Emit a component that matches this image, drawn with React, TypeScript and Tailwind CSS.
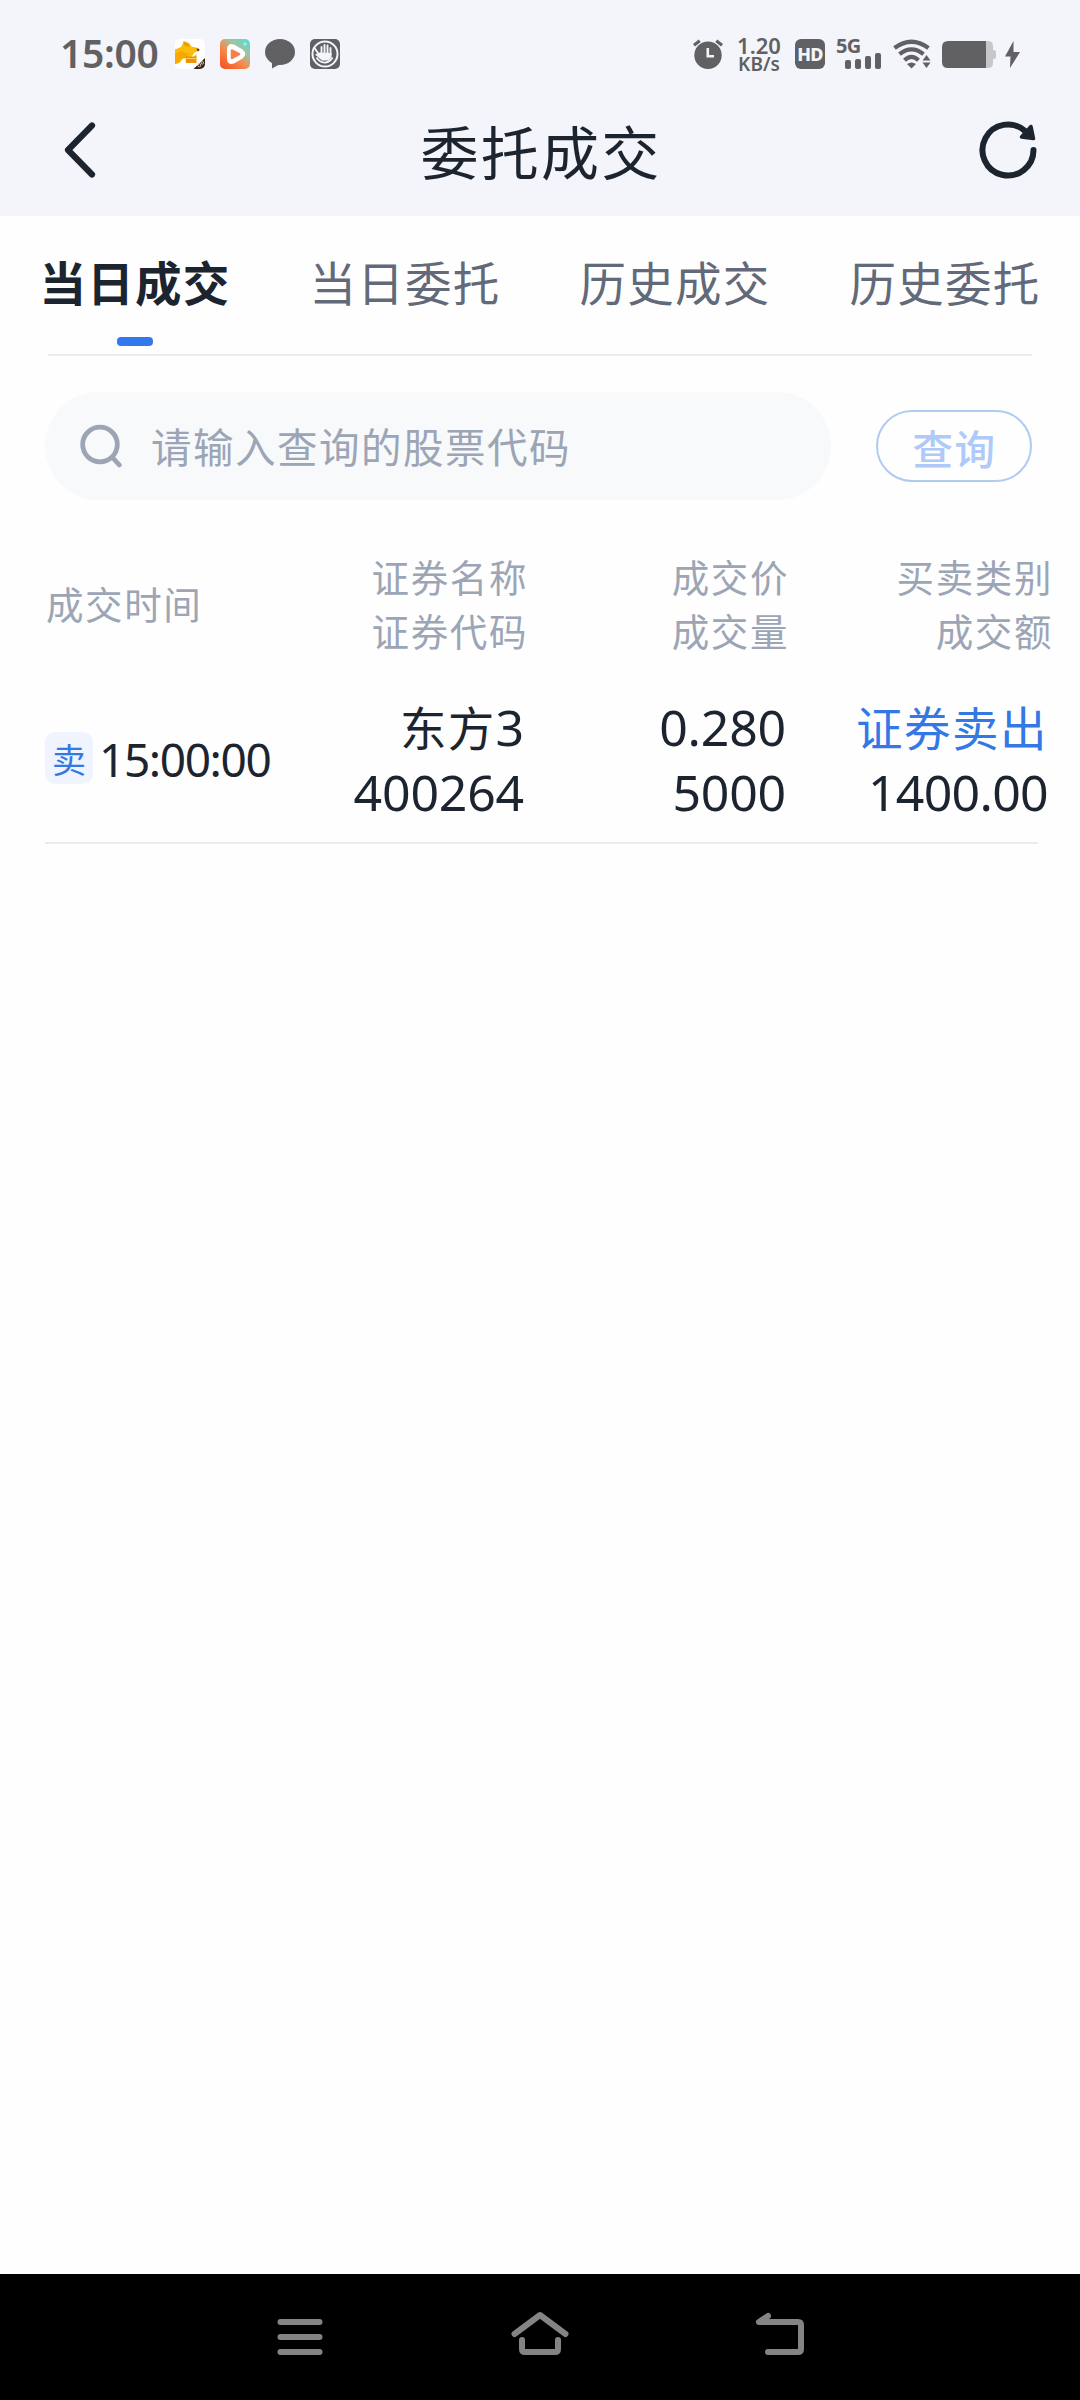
import React from "react";

const tabs = ["当日成交", "当日委托", "历史成交", "历史委托"];

const headers = [
  ["证券名称", "证券代码"],
  ["成交价", "成交量"],
  ["买卖类别", "成交额"],
];

function FoxAppIcon() {
  return (
    <svg className="h-[30px] w-[30px]" viewBox="0 0 30 30">
      <defs>
        <clipPath id="fox">
          <rect width="30" height="30" rx="5" />
        </clipPath>
      </defs>
      <g clipPath="url(#fox)">
        <rect width="30" height="30" fill="#fff" />
        <path d="M0 10.500l6-2.500L9 2l5 2 2.500 3.500 6.500 1.500 1.500 3-5 1.500-3 4.500H9l-3.500 5-5.500 2z" fill="#fbbd0d" />
        <path d="M0 14.500l6-2.500 8 3-3 4-5 1-2 4-4 1z" fill="#f8a800" />
        <path d="M8 2.500l5.500 2.500 1 3-5-1.500z" fill="#e99a08" />
        <path d="M10.500 17.500H19l2.500-2V24H11z" fill="#f0910c" />
        <path d="M10.500 19.500h10.500" stroke="#fcd24a" strokeWidth="1.200" />
        <path d="M21.500 9.500l3 .5-.5 2-2-.5z" fill="#5b3a12" />
        <path d="M30 19v11H18.500z" fill="#3a2218" />
        <circle cx="24.300" cy="26.300" r="1.500" fill="none" stroke="#e8dcd0" strokeWidth=".9" />
        <circle cx="27.300" cy="23.800" r="1.300" fill="none" stroke="#e8dcd0" strokeWidth=".9" />
      </g>
    </svg>
  );
}

function VideoAppIcon() {
  return (
    <svg className="h-[30px] w-[30px]" viewBox="0 0 30 30">
      <defs>
        <linearGradient id="vid" x1="0.1" y1="1" x2="0.900" y2="0">
          <stop offset="0" stopColor="#f9501c" />
          <stop offset=".42" stopColor="#f58a4e" />
          <stop offset=".7" stopColor="#9fc3a4" />
          <stop offset="1" stopColor="#4fe0cf" />
        </linearGradient>
      </defs>
      <rect width="30" height="30" rx="5" fill="url(#vid)" />
      <path d="M9 10q0-4 4-2.700l8.500 5q3.500 2.700 0 5.400l-8.500 5q-4 1.300-4-2.700z" fill="#fff" stroke="#fff" strokeWidth="4" strokeLinejoin="round" />
      <path d="M12 11.500l7 3.700-7 3.800z" fill="#f4804a" stroke="#f4804a" strokeWidth="2.500" strokeLinejoin="round" />
      <path d="M25 3v4M23 5h4" stroke="#b9f3e6" strokeWidth="1" />
    </svg>
  );
}

function ChatIcon() {
  return (
    <svg className="h-[30px] w-[30px]" viewBox="0 0 30 30" fill="#616163">
      <ellipse cx="15" cy="13" rx="15" ry="13" />
      <path d="M7 22v7.500l9-5z" />
    </svg>
  );
}

function HandIcon() {
  return (
    <svg className="h-[30px] w-[30px]" viewBox="0 0 30 30">
      <rect width="30" height="30" rx="5" fill="#616163" />
      <circle cx="15" cy="15" r="12.500" fill="none" stroke="#f4f5fa" strokeWidth="2" />
      <path d="M4.500 9l4.500 6.500M11.500 8v6M14.500 6v8M17.500 6.500v8M20.500 9v7" fill="none" stroke="#f4f5fa" strokeWidth="1.900" strokeLinecap="round" />
      <path d="M5 15.500l4.500-2 12 .5v4l-2.500 3.500h-7z" fill="#f4f5fa" />
      <path d="M6.500 18.500q3.500 5.500 9 5 4.500-.5 7-5" fill="none" stroke="#f4f5fa" strokeWidth="1.800" />
    </svg>
  );
}

function AlarmIcon() {
  return (
    <svg className="h-[30px] w-[30px]" viewBox="0 0 30 30">
      <circle cx="15" cy="16.300" r="13.700" fill="#616163" />
      <path d="M1 6.200L6.700 1.700M29 6.200l-5.700-4.500" stroke="#616163" strokeWidth="3.200" />
      <path d="M14.800 9v8.300H21" fill="none" stroke="#f4f5fa" strokeWidth="2.600" />
    </svg>
  );
}

function WifiIcon() {
  return (
    <svg className="h-[30px] w-[38px]" viewBox="0 0 38 30">
      <g fill="none" stroke="#616163" strokeWidth="4.200">
        <path d="M1.500 9Q18.500-3.500 35.500 9" />
        <path d="M6.500 15.200Q18.500 5.500 30.500 15.200" />
        <path d="M11.500 21.200Q18.500 14.500 25.500 21.200" />
      </g>
      <path d="M14 25q4.500-3 9 0l-4.500 4.500z" fill="#616163" />
      <path d="M29.500 21.500h8L33.500 16zM29.500 23.500h8L33.500 29z" fill="#616163" />
    </svg>
  );
}

function StatusBar() {
  return (
    <div className="flex h-[108px] items-center justify-between px-[60px] text-[#616163]">
      <div className="flex items-center gap-[15px]">
        <span className="w-[100px] pb-[2px] text-[39px] leading-[48px] font-semibold tracking-[-0.300px]">15:00</span>
        <FoxAppIcon />
        <VideoAppIcon />
        <ChatIcon />
        <HandIcon />
      </div>
      <div className="flex items-center">
        <AlarmIcon />
        <div className="ml-[14px] flex w-[44px] flex-col items-center font-semibold whitespace-nowrap">
          <span className="text-[22px] leading-[19px]">1.20</span>
          <span className="text-[19px] leading-[18px]">KB/s</span>
        </div>
        <div className="ml-[14px] flex h-[30px] w-[30px] items-center justify-center rounded-[6px] bg-[#616163] text-[18px] leading-none font-extrabold text-[#f4f5fa]">
          <span className="-mx-1 tracking-[-0.800px]">HD</span>
        </div>
        <div className="relative ml-[11px] h-[30px] w-[46px]">
          <span className="absolute -top-[3px] left-0 text-[20px] leading-[20px] font-bold tracking-[-0.800px]">5G</span>
          <div className="flex h-full items-end justify-end gap-[4px] pr-[1px]">
            <i className="h-[9px] w-[6px] rounded-[2px] bg-[#616163]" />
            <i className="h-[10px] w-[6px] rounded-[2px] bg-[#616163]" />
            <i className="h-[13px] w-[6px] rounded-[2px] bg-[#616163]" />
            <i className="h-[16px] w-[6px] rounded-[2px] bg-[#616163]" />
          </div>
        </div>
        <div className="ml-[11px]">
          <WifiIcon />
        </div>
        <svg className="ml-[11px] h-[30px] w-[54px]" viewBox="0 0 54 30">
          <path d="M44 2h2q5 0 5 5v4q3 0 3 2v5q0 2-3 2v4q0 5-5 5h-2z" fill="#c6c7cb" />
          <path d="M44 2H6Q0 2 0 8v15q0 6 6 6h38z" fill="#616163" />
        </svg>
        <svg className="ml-[9px] h-[30px] w-[15px]" viewBox="0 0 15 30">
          <path d="M8.500 2L0 17.500h5.500L5 29 15 13H8.500z" fill="#616163" />
        </svg>
      </div>
    </div>
  );
}

function TitleBar() {
  return (
    <div className="flex h-[108px] items-center justify-between px-10 pb-[24px]">
      <svg className="h-[82px] w-[80px]" viewBox="0 9 80 82" fill="none" stroke="#1c2430" strokeWidth="6.200" strokeLinecap="round" strokeLinejoin="round">
        <path d="M52 25.500L28 50l24 24.500" />
      </svg>
      <h1 className="pl-[2px] text-[58px] leading-[82px] font-normal tracking-[2.200px] text-[#1c2430]">委托成交</h1>
      <svg className="h-[82px] w-[80px]" viewBox="0 9 80 82" fill="none" stroke="#1c2430" strokeWidth="6" strokeLinecap="round" strokeLinejoin="round">
        <path d="M73.500 50A25.500 25.500 0 1 1 65 31" />
        <path d="M71 26.500L61.500 37l12 1.500z" fill="#1c2430" strokeWidth="3.500" />
      </svg>
    </div>
  );
}

function Tabs() {
  return (
    <div>
      <div className="grid grid-cols-4">
        {tabs.map((t, i) => (
          <div key={t} className="flex flex-col items-center pt-[35px] pb-2">
            <span
              className={
                i === 0
                  ? "text-[46.500px] leading-[60px] font-bold tracking-[1.300px] text-[#1c2430]"
                  : "text-[46.500px] leading-[60px] tracking-[1.300px] text-[#626978]"
              }
            >
              {t}
            </span>
            <span className={i === 0 ? "mt-[26px] h-[9px] w-9 rounded-[4px] bg-[#3478f0]" : "mt-[26px] h-[9px] w-9"} />
          </div>
        ))}
      </div>
      <div className="mx-12 h-[2px] bg-[#ebebeb]" />
    </div>
  );
}

function SearchRow() {
  return (
    <div className="mt-9 flex items-center pl-[45px]">
      <div className="flex h-[108px] w-[786px] items-center rounded-full bg-[#f7f9fb] pl-[35px] text-[#9ca5b5]">
        <svg className="h-[44px] w-[44px]" viewBox="0 0 44 44" fill="none" stroke="currentColor" strokeWidth="4.800" strokeLinecap="round">
          <circle cx="20" cy="20.500" r="17.300" />
          <path d="M33 34l6.300 7" />
        </svg>
        <span className="ml-[27px] text-[40.500px] leading-[60px] tracking-[1.500px]">请输入查询的股票代码</span>
      </div>
      <button className="ml-[45px] flex h-[72px] w-[156px] items-center justify-center rounded-full border-2 border-[#b0caf2] pt-[3px] pl-[1px] text-[40.500px] leading-[60px] font-medium tracking-[1.500px] text-[#afc9f8]">
        查询
      </button>
    </div>
  );
}

function TradeTable() {
  return (
    <div className="mt-[49px]">
      <div className="grid grid-cols-[220px_262px_261px_264px] items-center pl-[46px] text-[37.500px] leading-[54px] tracking-[1.600px] text-[#9ca5b5]">
        <div>成交时间</div>
        {headers.map(([a, b]) => (
          <div key={a} className="text-right">
            <div>{a}</div>
            <div>{b}</div>
          </div>
        ))}
      </div>
      <div className="mt-[38px] grid grid-cols-[220px_259px_262px_262px] items-center pb-[17px] pl-[45px] font-['Noto_Sans','Noto_Sans_CJK_SC',sans-serif] text-[50px] leading-[65px] text-[#1c2430]">
        <div className="flex items-center gap-[6px] whitespace-nowrap">
          <span className="mb-[4px] flex h-[52px] w-[48px] shrink-0 items-center justify-center rounded-[10px] bg-[#eff4fe] pt-[2px] font-['Noto_Sans_CJK_SC',sans-serif] text-[34px] leading-[50px] text-[#3478e6]">
            卖
          </span>
          <span className="mb-[2px] text-[46px] tracking-[-1.400px]">15:00:00</span>
        </div>
        <div className="text-right">
          <div>
            <span className="text-[46.500px] leading-none tracking-[1.200px]">东方</span>3
          </div>
          <div className="tracking-[-0.200px]">400264</div>
        </div>
        <div className="text-right tracking-[-0.200px]">
          <div>0.280</div>
          <div>5000</div>
        </div>
        <div className="text-right tracking-[-0.700px]">
          <div className="h-[65px] text-[#3478e6]">
            <span className="text-[46.500px] leading-none tracking-[1.500px]">证券卖出</span>
          </div>
          <div>1400.00</div>
        </div>
      </div>
      <div className="mr-[42px] ml-[45px] h-[2px] bg-[#ebebeb]" />
    </div>
  );
}

function NavBar() {
  return (
    <div className="mt-auto flex h-[126px] items-center justify-center gap-[180px] bg-black">
      <svg className="h-[60px] w-[60px]" viewBox="0 0 60 60" stroke="#848484" strokeWidth="6" strokeLinecap="round">
        <path d="M10.500 15h39M10.500 30h39M10.500 45h39" />
      </svg>
      <svg className="h-[60px] w-[60px]" viewBox="0 0 60 60" fill="none" stroke="#848484" strokeWidth="6" strokeLinecap="round" strokeLinejoin="round">
        <path d="M4.500 27L30 8l25.500 19" />
        <path d="M12 33v9q0 3 3 3h30q3 0 3-3v-9" />
      </svg>
      <svg className="h-[60px] w-[60px]" viewBox="0 0 60 60" fill="none" stroke="#848484" strokeWidth="6" strokeLinecap="round" strokeLinejoin="round">
        <path d="M18 9L9 15h39q3 0 3 3v24q0 3-3 3H18" />
      </svg>
    </div>
  );
}

export default function App() {
  return (
    <div className="flex h-[2400px] w-[1080px] flex-col overflow-hidden bg-[#fefefe] font-['Noto_Sans_CJK_SC',sans-serif]">
      <div className="bg-[#f4f5fa]">
        <div className="font-['Noto_Sans',sans-serif]">
          <StatusBar />
        </div>
        <TitleBar />
      </div>
      <Tabs />
      <SearchRow />
      <TradeTable />
      <NavBar />
    </div>
  );
}
